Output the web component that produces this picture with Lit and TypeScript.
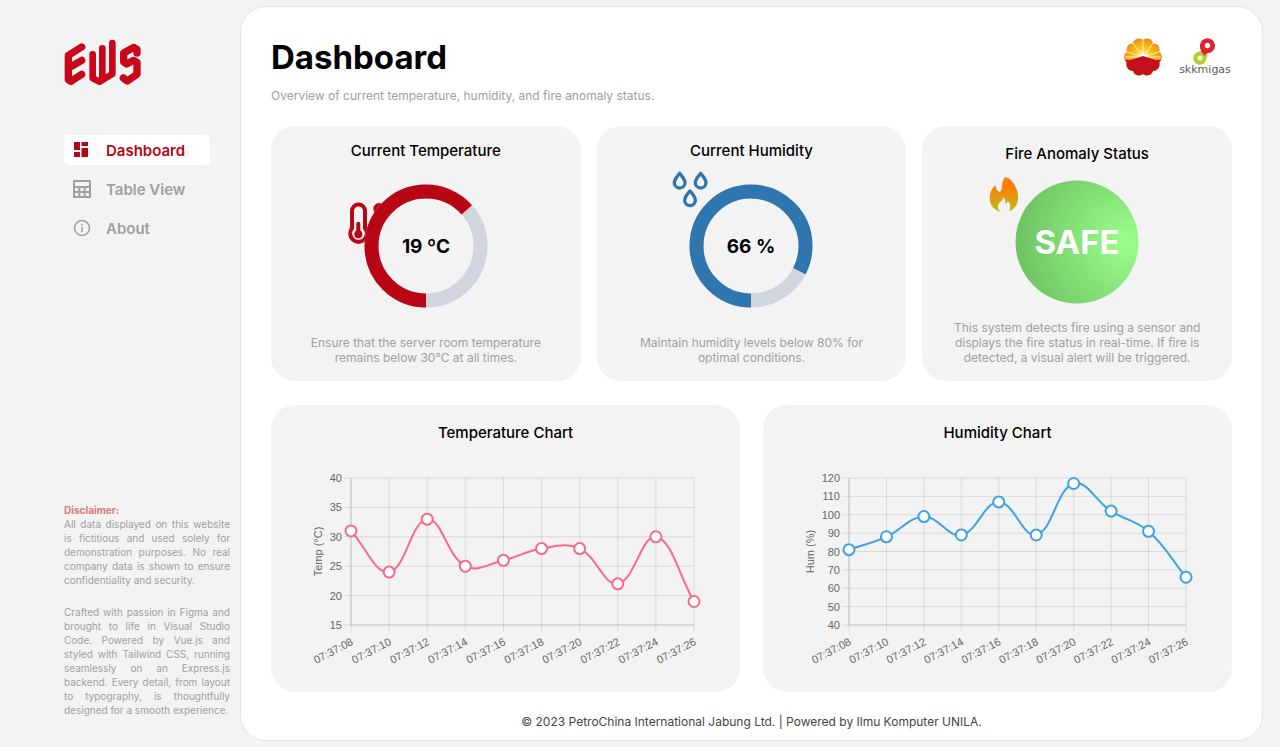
import { LitElement, html, svg, css } from "lit";
import { customElement, property } from "lit/decorators.js";

const TIMES = ["08", "10", "12", "14", "16", "18", "20", "22", "24", "26"].map((s) => `07:37:${s}`);

type Point = { x: number; y: number };

/** Cubic spline through the points, with control points kept inside the plot area. */
function splinePath(points: Point[], top: number, bottom: number, tension = 0.4): string {
  const clamp = (y: number) => Math.min(bottom, Math.max(top, y));
  const controls = points.map((cur, i) => {
    const prev = points[i - 1] ?? cur;
    const next = points[i + 1] ?? cur;
    const before = Math.hypot(cur.x - prev.x, cur.y - prev.y);
    const after = Math.hypot(next.x - cur.x, next.y - cur.y);
    const total = before + after || 1;
    const a = (tension * before) / total;
    const b = (tension * after) / total;
    return {
      inX: cur.x - a * (next.x - prev.x),
      inY: clamp(cur.y - a * (next.y - prev.y)),
      outX: cur.x + b * (next.x - prev.x),
      outY: clamp(cur.y + b * (next.y - prev.y)),
    };
  });
  return points
    .map((p, i) =>
      i === 0
        ? `M${p.x} ${p.y}`
        : `C${controls[i - 1].outX} ${controls[i - 1].outY} ${controls[i].inX} ${controls[i].inY} ${p.x} ${p.y}`
    )
    .join("");
}

@customElement("line-chart")
class LineChart extends LitElement {
  @property({ attribute: false }) values: number[] = [];
  @property({ type: Number }) min = 0;
  @property({ type: Number }) max = 100;
  @property({ type: Number }) step = 10;
  @property({ type: Number }) left = 80;
  @property() axis = "";
  @property() color = "#000";

  static styles = css`
    :host { display: block; }
    svg { display: block; width: 100%; height: auto; }
    text { font-family: "Liberation Sans", Arial, sans-serif; font-size: 11px; fill: #666; }
    .grid { stroke: #000; stroke-opacity: 0.1; }
    .axis { stroke: #000; stroke-opacity: 0.12; }
    .line { fill: none; stroke-width: 2; }
    .dot { fill: #fff; stroke-width: 2; }
  `;

  render() {
    const top = 32;
    const bottom = 179;
    const right = 423;
    const { left, min, max, step } = this;
    const toX = (i: number) => left + (i * (right - left)) / (TIMES.length - 1);
    const toY = (v: number) => bottom - ((v - min) / (max - min)) * (bottom - top);
    const ticks: number[] = [];
    for (let v = min; v <= max; v += step) ticks.push(v);
    const points = this.values.map((v, i) => ({ x: toX(i), y: toY(v) }));
    return html`<svg viewBox="0 0 469 228" role="img" aria-label=${this.axis}>
      ${ticks.map(
        (v) => svg`
          <line class="grid" x1=${left - 7} x2=${right} y1=${toY(v)} y2=${toY(v)}></line>
          <text x=${left - 9} y=${toY(v) + 4} text-anchor="end">${v}</text>`
      )}
      ${TIMES.map(
        (t, i) => svg`
          <line class="grid" x1=${toX(i)} x2=${toX(i)} y1=${top} y2=${bottom + 7}></line>
          <text transform="translate(${toX(i) + 3} ${bottom + 19}) rotate(-28)" text-anchor="end">${t}</text>`
      )}
      <path class="axis" fill="none" d="M${left} ${top}V${bottom}H${right}"></path>
      <text transform="translate(51 ${(top + bottom) / 2}) rotate(-90)" text-anchor="middle">${this.axis}</text>
      <path class="line" stroke=${this.color} d=${splinePath(points, top, bottom)}></path>
      ${points.map((p) => svg`<circle class="dot" stroke=${this.color} cx=${p.x} cy=${p.y} r="5.5"></circle>`)}
    </svg>`;
  }
}

@customElement("ring-gauge")
class RingGauge extends LitElement {
  @property({ type: Number }) fraction = 0;
  @property() color = "#000";
  @property() label = "";
  @property() icon = "";

  static styles = css`
    :host { display: block; width: 124px; height: 124px; }
    svg { display: block; width: 100%; height: 100%; overflow: visible; }
    circle.ring { fill: none; stroke-width: 14; }
    text { font: 700 19px Inter, sans-serif; fill: #000; }
  `;

  private thermometer() {
    return svg`<g transform="translate(62 62) scale(.3333) translate(-289 -348)" fill="none" stroke=${this.color}>
      <path stroke-width="12" d="M67 243a19.500 19.500 0 0 1 39 0V295a25 25 0 1 1 -39 0Z"></path>
      <path stroke-width="12" stroke-linecap="round" d="M86 281V312"></path>
      <circle cx="86" cy="313" r="12" fill=${this.color} stroke="none"></circle>
      <circle cx="148" cy="236" r="11" stroke-width="12"></circle>
    </g>`;
  }

  private drops() {
    const drop = (x: number, y: number) =>
      svg`<path transform="translate(${x} ${y})" d="M0 -22C-7 -14 -16 -4 -16 6A16 16 0 0 0 16 6C16 -4 7 -14 0 -22Z"></path>`;
    return svg`<g transform="translate(62 62) scale(.3333) translate(-277 -348)" fill="none"
      stroke=${this.color} stroke-width="10" stroke-linejoin="round">
      ${drop(63, 152)}${drop(126, 152)}${drop(94, 205)}
    </g>`;
  }

  render() {
    const length = 2 * Math.PI * 54.5;
    return html`<svg viewBox="0 0 124 124" role="img" aria-label=${this.label}>
      ${this.icon === "thermometer" ? this.thermometer() : this.drops()}
      <circle class="ring" cx="62" cy="62" r="54.500" stroke="#d1d5de"></circle>
      <circle class="ring" cx="62" cy="62" r="54.500" stroke=${this.color}
        stroke-dasharray="${length * this.fraction} ${length}" transform="rotate(90 62 62)"></circle>
      <text x="62" y="69" text-anchor="middle">${this.label}</text>
    </svg>`;
  }
}

@customElement("app-root")
class AppRoot extends LitElement {
  static styles = css`
    :host {
      display: flex;
      min-height: 100vh;
      box-sizing: border-box;
      background: #f3f3f3;
      color: #000;
      font-family: Inter, sans-serif;
      font-size: 12px;
    }
    h1, h2, p { margin: 0; }
    svg { display: block; flex: none; }
    aside {
      flex: none;
      width: 240px;
      box-sizing: border-box;
      padding: 39px 10px 30px 64px;
      display: flex;
      flex-direction: column;
    }
    nav { display: flex; flex-direction: column; gap: 9px; margin-top: 48px; padding-right: 20px; }
    .link {
      display: flex;
      align-items: center;
      gap: 15px;
      height: 30px;
      padding-left: 9px;
      border-radius: 5px;
      color: #a0a0a0;
      font-size: 15px;
      font-weight: 600;
      text-decoration: none;
    }
    .link.active { background: #fff; color: #b90415; }
    .notes { margin-top: auto; color: #a0a0a0; font-size: 10px; line-height: 14px; }
    .notes p { text-align: justify; }
    .notes .credits { margin-top: 18px; }
    .warning { display: block; color: #d67a7a; font-weight: 700; }
    main {
      flex: 1;
      min-width: 0;
      margin: 6px 17px 6px 0;
      padding: 30px 30px 10px;
      border: 1px solid #e5e5e5;
      border-radius: 26px;
      background: #fff;
    }
    header { display: flex; justify-content: space-between; align-items: flex-start; }
    h1 { font-size: 33px; line-height: 40px; font-weight: 700; }
    .lead { margin-top: 11px; line-height: 16px; color: #a0a0a0; }
    .logos { display: flex; gap: 15px; }
    .logos text { font: 11px "DejaVu Sans", sans-serif; fill: #5c5c5c; }
    .row { display: grid; gap: 16px; grid-template-columns: repeat(3, 1fr); margin-top: 22px; }
    .row.charts { gap: 23px; grid-template-columns: repeat(2, 1fr); margin-top: 24px; }
    .card {
      display: flex;
      flex-direction: column;
      align-items: center;
      padding: 12px 28px 16px;
      border-radius: 24px;
      background: #f3f3f3;
    }
    h2 { font-size: 15px; line-height: 26px; font-weight: 500; }
    .card ring-gauge { margin: 20px 0 27px; }
    .card p { line-height: 15px; color: #a0a0a0; text-align: center; max-width: 252px; }
    .card.fire { padding-top: 15px; }
    .status { margin: 13px 0 16px; width: 124px; height: 124px; overflow: visible; }
    .status text { font: 700 33px Inter, sans-serif; fill: #fff; }
    .card.chart { padding: 15px 0 18px; }
    .card.chart line-chart { width: 100%; }
    footer { margin-top: 22px; line-height: 16px; text-align: center; color: #444; }
  `;

  private brand() {
    return html`<svg width="78" height="48" viewBox="42 42 234 144" role="img" aria-label="EWS"
      fill="none" stroke="#c9061a" stroke-width="20" stroke-linejoin="round" stroke-linecap="round">
      <path stroke-width="22" d="M95 66L55 91V164L62 169L95 148M58 128L95 106"></path>
      <path d="M128 88V160L149 170L187 147V54M157 70V162"></path>
      <path stroke-width="22" d="M261 84V73L251 67L221 84V111L230 117L251 106L261 112V148L232 168L220 159"></path>
    </svg>`;
  }

  private flower() {
    const petals = Array.from({ length: 10 }, (_, i) => {
      const a = ((i * 36 + 18) * Math.PI) / 180;
      return { x: 20 + 12.5 * Math.sin(a), y: 20 - 12.5 * Math.cos(a) };
    });
    const rays = [-90, -72, -36, 0, 36, 72, 90].map((d) => (d * Math.PI) / 180);
    return html`<svg width="40" height="40" viewBox="0 0 40 40" role="img" aria-label="PetroChina">
      <defs>
        <radialGradient id="sun" gradientUnits="userSpaceOnUse" cx="20" cy="20" r="19">
          <stop offset="0" stop-color="#fffbd0"></stop>
          <stop offset=".45" stop-color="#fdc81e"></stop>
          <stop offset="1" stop-color="#ee8c12"></stop>
        </radialGradient>
        <clipPath id="petals">
          <circle cx="20" cy="20" r="16.500"></circle>
          ${petals.map((p) => svg`<circle cx=${p.x} cy=${p.y} r="6.5"></circle>`)}
        </clipPath>
      </defs>
      <g clip-path="url(#petals)">
        <rect width="40" height="40" fill="url(#sun)"></rect>
        ${rays.map(
          (a) => svg`<line x1="20" y1="20" x2=${20 + 18 * Math.sin(a)} y2=${20 - 18 * Math.cos(a)}
            stroke="#fff3b8" stroke-width="1"></line>`
        )}
        <path fill="#fff" d="M20 14L21 18L25 17L23 21H17L15 17L19 18Z"></path>
        <path fill="#c4101c" d="M0 23H7L20 19L33 23H40V40H0Z"></path>
      </g>
    </svg>`;
  }

  private skkmigas() {
    return html`<svg width="54" height="40" viewBox="0 0 54 40" role="img" aria-label="skkmigas">
      <path fill="#b5ce2b" d="M29 14C30 19 29 20 28 23A6.500 6.500 0 1 1 20 15C23 13 26 14 29 14Z"></path>
      <circle cx="22" cy="21" r="2.500" fill="#fff"></circle>
      <path fill="#e3202f" d="M27 19C22 14 22 11 22 8.500A7.500 7.500 0 1 1 31 16C28 16 27 17 27 19Z"></path>
      <circle cx="29.500" cy="8.500" r="2.700" fill="#fff"></circle>
      <text x="27" y="36" text-anchor="middle">skkmigas</text>
    </svg>`;
  }

  private status() {
    return html`<svg class="status" viewBox="0 0 124 124" role="img" aria-label="SAFE">
      <defs>
        <radialGradient id="safe" gradientUnits="userSpaceOnUse" cx="112" cy="62" r="108">
          <stop offset="0" stop-color="#9bff8c"></stop>
          <stop offset="1" stop-color="#70c463"></stop>
        </radialGradient>
        <linearGradient id="flame" x1="0" y1="0" x2="0" y2="1">
          <stop offset=".3" stop-color="#ff7e0a"></stop>
          <stop offset="1" stop-color="#b5bf1c"></stop>
        </linearGradient>
      </defs>
      <path fill="url(#flame)" transform="translate(62 62) scale(.3333) translate(-322 -334)"
        d="M106 139C120 139 145 166 145 200C145 222 135 236 118 243C124 230 122 217 114 211C113 216 111 219 108 219C107 212 106 205 101 200C100 212 85 214 85 228C85 235 88 240 92 244C72 238 60 222 60 203C60 185 68 172 77 163C78 172 82 183 90 183C102 180 91 160 106 139Z"></path>
      <circle cx="62" cy="62" r="61.500" fill="url(#safe)"></circle>
      <text x="62" y="74" text-anchor="middle">SAFE</text>
    </svg>`;
  }

  render() {
    return html`
      <aside>
        ${this.brand()}
        <nav>
          <a class="link active" href="#dashboard" aria-current="page">
            <svg width="18" height="18" viewBox="0 0 18 18" fill="currentColor">
              <path d="M1 1h6v8H1zM1 11h6v5H1zM8.500 1H15v4H8.500zM8.500 7H15v9H8.500z"></path>
            </svg>
            Dashboard
          </a>
          <a class="link" href="#table">
            <svg width="18" height="18" viewBox="0 0 18 18" fill="none" stroke="currentColor" stroke-width="2">
              <path d="M1 1h16v16H1zM1 7h16M1 12h16M6.300 7v10M11.700 7v10"></path>
            </svg>
            Table View
          </a>
          <a class="link" href="#about">
            <svg width="18" height="18" viewBox="0 0 18 18" fill="none" stroke="currentColor" stroke-width="1.500">
              <circle cx="9" cy="9" r="7.500"></circle>
              <path d="M9 8v5M9 5v1.500"></path>
            </svg>
            About
          </a>
        </nav>
        <div class="notes">
          <strong class="warning">Disclaimer:</strong>
          <p>All data displayed on this website is fictitious and used solely for demonstration purposes. No real company data is shown to ensure confidentiality and security.</p>
          <p class="credits">Crafted with passion in Figma and brought to life in Visual Studio Code. Powered by Vue.js and styled with Tailwind CSS, running seamlessly on an Express.js backend. Every detail, from layout to typography, is thoughtfully designed for a smooth experience.</p>
        </div>
      </aside>
      <main>
        <header>
          <div>
            <h1>Dashboard</h1>
            <p class="lead">Overview of current temperature, humidity, and fire anomaly status.</p>
          </div>
          <div class="logos">${this.flower()}${this.skkmigas()}</div>
        </header>
        <section class="row">
          <article class="card">
            <h2>Current Temperature</h2>
            <ring-gauge icon="thermometer" label="19 ºC" color="#b80614" .fraction=${19 / 30}></ring-gauge>
            <p>Ensure that the server room temperature remains below 30°C at all times.</p>
          </article>
          <article class="card">
            <h2>Current Humidity</h2>
            <ring-gauge icon="drops" label="66 %" color="#3076ae" .fraction=${66 / 80}></ring-gauge>
            <p>Maintain humidity levels below 80% for optimal conditions.</p>
          </article>
          <article class="card fire">
            <h2>Fire Anomaly Status</h2>
            ${this.status()}
            <p>This system detects fire using a sensor and displays the fire status in real-time. If fire is detected, a visual alert will be triggered.</p>
          </article>
        </section>
        <section class="row charts">
          <article class="card chart">
            <h2>Temperature Chart</h2>
            <line-chart axis="Temp (°C)" color="#f8698a" min="15" max="40" step="5" left="80"
              .values=${[31, 24, 33, 25, 26, 28, 28, 22, 30, 19]}></line-chart>
          </article>
          <article class="card chart">
            <h2>Humidity Chart</h2>
            <line-chart axis="Hum (%)" color="#3ba2e5" min="40" max="120" step="10" left="86"
              .values=${[81, 88, 99, 89, 107, 89, 117, 102, 91, 66]}></line-chart>
          </article>
        </section>
        <footer>© 2023 PetroChina International Jabung Ltd. | Powered by Ilmu Komputer UNILA.</footer>
      </main>
    `;
  }
}
